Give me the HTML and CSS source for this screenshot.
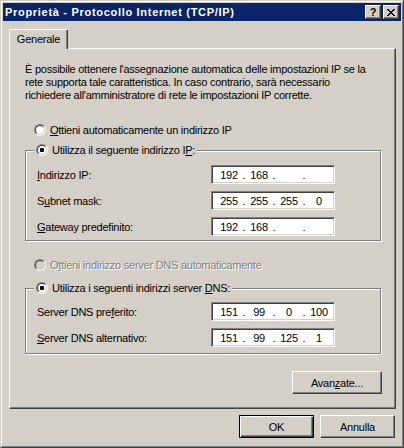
FILE: index.html
```html
<!DOCTYPE html>
<html lang="it">
<head>
    <meta charset="UTF-8">
    <title>Proprietà - Protocollo Internet (TCP/IP)</title>
    <link rel="stylesheet" href="styles.css">
</head>
<body>

<div class="window">
    <div class="frame">
        <div class="titlebar">
            <span class="title">Proprietà - Protocollo Internet (TCP/IP)</span>
            <div class="caption-btns">
                <span class="cap-btn help">?</span>
                <span class="cap-btn close">
                    <svg width="8" height="7" viewBox="0 0 8 7" shape-rendering="crispEdges">
                        <path d="M0 0h2l2 2.5 2-2.5h2l-3 3.5 3 3.5h-2l-2-2.5-2 2.5h-2l3-3.5z" fill="#000"/>
                    </svg>
                </span>
            </div>
        </div>

        <div class="tabs">
            <div class="tab">Generale</div>
        </div>

        <div class="panel">
            <p class="intro">È possibile ottenere l'assegnazione automatica delle impostazioni IP se la<br>rete supporta tale caratteristica. In caso contrario, sarà necessario<br>richiedere all'amministratore di rete le impostazioni IP corrette.</p>

            <div class="option first">
                <span class="radio"></span>
                <span><u>O</u>ttieni automaticamente un indirizzo IP</span>
            </div>

            <div class="group ip-group">
                <div class="legend">
                    <span class="radio checked"></span>
                    <span>Utilizza il seguente indirizzo I<u>P</u>:</span>
                </div>
                <div class="rows">
                    <div class="field">
                        <span class="field-label"><u>I</u>ndirizzo IP:</span>
                        <div class="ipbox">
                            <span class="seg">192</span><span class="dot">.</span><span class="seg">168</span><span class="dot">.</span><span class="seg"></span><span class="dot">.</span><span class="seg"></span>
                        </div>
                    </div>
                    <div class="field">
                        <span class="field-label">S<u>u</u>bnet mask:</span>
                        <div class="ipbox">
                            <span class="seg">255</span><span class="dot">.</span><span class="seg">255</span><span class="dot">.</span><span class="seg">255</span><span class="dot">.</span><span class="seg">0</span>
                        </div>
                    </div>
                    <div class="field">
                        <span class="field-label"><u>G</u>ateway predefinito:</span>
                        <div class="ipbox">
                            <span class="seg">192</span><span class="dot">.</span><span class="seg">168</span><span class="dot">.</span><span class="seg"></span><span class="dot">.</span><span class="seg"></span>
                        </div>
                    </div>
                </div>
            </div>

            <div class="option disabled">
                <span class="radio"></span>
                <span>O<u>t</u>tieni indirizzo server DNS automaticamente</span>
            </div>

            <div class="group dns-group">
                <div class="legend">
                    <span class="radio checked"></span>
                    <span>Utilizza i seguenti indirizzi server <u>D</u>NS:</span>
                </div>
                <div class="rows">
                    <div class="field">
                        <span class="field-label">Server DNS pre<u>f</u>erito:</span>
                        <div class="ipbox">
                            <span class="seg">151</span><span class="dot">.</span><span class="seg">99</span><span class="dot">.</span><span class="seg">0</span><span class="dot">.</span><span class="seg">100</span>
                        </div>
                    </div>
                    <div class="field">
                        <span class="field-label"><u>S</u>erver DNS alternativo:</span>
                        <div class="ipbox">
                            <span class="seg">151</span><span class="dot">.</span><span class="seg">99</span><span class="dot">.</span><span class="seg">125</span><span class="dot">.</span><span class="seg">1</span>
                        </div>
                    </div>
                </div>
            </div>

            <div class="advanced-row">
                <span class="btn advanced">Avan<u>z</u>ate...</span>
            </div>
        </div>

        <div class="footer">
            <span class="btn default">OK</span>
            <span class="btn">Annulla</span>
        </div>
    </div>
</div>

</body>
</html>
```

FILE: styles.css
```css
body {
    margin: 0;
    font-family: 'Liberation Sans', Arial, sans-serif;
    font-size: 11px;
    letter-spacing: -0.25px;
    color: #000;
    background: #d4d0c8;
}

.window {
    width: 404px;
    height: 448px;
    box-sizing: border-box;
    border: 1px solid;
    border-color: #d4d0c8 #404040 #404040 #d4d0c8;
    background: #d4d0c8;
}

.frame {
    height: 100%;
    box-sizing: border-box;
    border: 1px solid;
    border-color: #fff #808080 #808080 #fff;
    padding: 1px;
}

/* title bar */

.titlebar {
    height: 18px;
    display: flex;
    align-items: center;
    justify-content: space-between;
    background: #0a246a;
    padding-left: 2px;
}

.title {
    color: #fff;
    font-weight: bold;
    font-size: 11px;
    letter-spacing: 0.7px;
    white-space: nowrap;
}

.caption-btns {
    display: flex;
    gap: 2px;
    padding-right: 2px;
}

.cap-btn {
    width: 16px;
    height: 14px;
    box-sizing: border-box;
    display: flex;
    align-items: center;
    justify-content: center;
    background: #d4d0c8;
    border: 1px solid;
    border-color: #fff #404040 #404040 #fff;
    box-shadow: inset -1px -1px #808080;
}

.cap-btn.help {
    font-weight: bold;
    font-size: 11px;
    line-height: 12px;
    letter-spacing: 0;
}

/* tabs */

.tabs {
    display: flex;
    height: 19px;
    margin-top: 8px;
    padding-left: 6px;
}

.tab {
    position: relative;
    z-index: 1;
    height: 20px;
    width: 59px;
    box-sizing: border-box;
    display: flex;
    align-items: center;
    justify-content: center;
    padding-bottom: 1px;
    background: #d4d0c8;
    border-top: 1px solid #fff;
    border-left: 1px solid #fff;
    border-right: 1px solid #404040;
    border-radius: 2px 2px 0 0;
    box-shadow: inset -1px 0 #808080;
}

.panel {
    height: 361px;
    box-sizing: border-box;
    margin: 0 5px 0 6px;
    padding-top: 14px;
    border: 1px solid;
    border-color: #fff #404040 #404040 #fff;
    box-shadow: inset -1px -1px #808080;
}

.intro {
    margin: 0 0 0 15px;
    line-height: 13px;
    white-space: nowrap;
}

/* radio buttons */

.option, .legend {
    display: flex;
    align-items: center;
    gap: 4px;
    height: 16px;
    white-space: nowrap;
}

.option {
    padding-left: 24px;
}

.option.first {
    margin-top: 20px;
}

.option.disabled {
    margin-top: 16px;
    color: #808080;
    text-shadow: 1px 1px #fff;
}

.radio {
    width: 12px;
    height: 12px;
    box-sizing: border-box;
    border-radius: 50%;
    border: 1px solid;
    border-color: #808080 #fff #fff #808080;
    display: flex;
    align-items: center;
    justify-content: center;
    flex-shrink: 0;
}

.radio::before {
    content: "";
    width: 10px;
    height: 10px;
    box-sizing: border-box;
    border-radius: 50%;
    border: 1px solid;
    border-color: #404040 #d4d0c8 #d4d0c8 #404040;
    background: #fff;
}

.option.disabled .radio::before {
    background: #d4d0c8;
}

.radio.checked::before {
    background: radial-gradient(circle, #000 0 2px, #fff 2.5px);
}

/* group boxes */

.group {
    margin: 12px 14px 0 15px;
    border: 1px solid #808080;
    box-shadow: inset 1px 1px #fff, 1px 1px #fff;
    padding: 0 0 4px 11px;
}

.dns-group {
    margin-top: 15px;
    padding-bottom: 6px;
}

.legend {
    width: fit-content;
    margin: -9px 0 0 -3px;
    padding: 0 2px;
    background: #d4d0c8;
}

.rows {
    display: flex;
    flex-direction: column;
    gap: 7px;
    margin-top: 7px;
}

.dns-group .rows {
    margin-top: 6px;
}

.field {
    display: flex;
    align-items: center;
}

.field-label {
    width: 174px;
    white-space: nowrap;
}

.ipbox {
    width: 124px;
    height: 19px;
    box-sizing: border-box;
    display: flex;
    align-items: center;
    padding-left: 4px;
    background: #fff;
    border: 1px solid;
    border-color: #808080 #fff #fff #808080;
    box-shadow: inset 1px 1px #404040, inset -1px -1px #d4d0c8;
}

.seg {
    width: 26px;
    text-align: center;
}

.dot {
    width: 4px;
    text-align: center;
}

/* buttons */

.advanced-row {
    display: flex;
    justify-content: flex-end;
    margin: 17px 13px 0 0;
}

.btn {
    width: 75px;
    height: 23px;
    box-sizing: border-box;
    display: flex;
    align-items: center;
    justify-content: center;
    border: 1px solid;
    border-color: #fff #404040 #404040 #fff;
    box-shadow: inset -1px -1px #808080;
}

.btn.advanced {
    width: 90px;
}

.btn.default {
    border-color: #000;
    box-shadow: inset 1px 1px #fff, inset -1px -1px #404040, inset -2px -2px #808080;
}

.footer {
    display: flex;
    justify-content: flex-end;
    gap: 6px;
    margin: 6px 6px 0 0;
}
```
